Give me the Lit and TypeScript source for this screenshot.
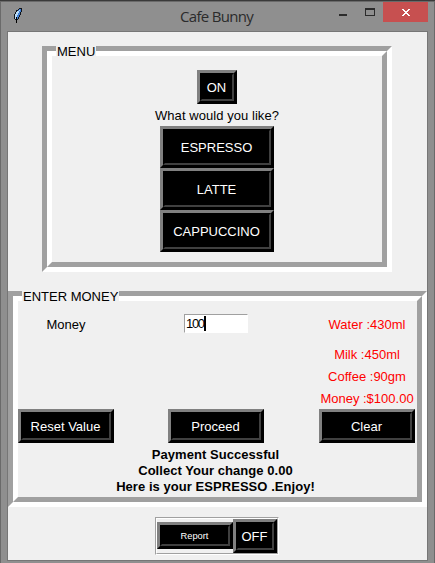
import { LitElement, html, css, svg } from "lit";
import { customElement, property } from "lit/decorators.js";

@customElement("tk-button")
class TkButton extends LitElement {
  @property() label = "";
  static styles = css`
    :host { display: block; box-sizing: border-box; background: #000; flex: none; }
    .outer { box-sizing: border-box; height: 100%; border: 3px solid; border-color: #808080 #000 #000 #808080; }
    .inner {
      box-sizing: border-box; height: 100%; border: 2px solid; border-color: #000 #404040 #404040 #000;
      display: flex; align-items: center; justify-content: center; color: #fff; white-space: nowrap; line-height: 16px;
      padding-top: var(--label-drop, 2px); padding-right: 1px;
    }
  `;
  render() {
    return html`<div class="outer"><div class="inner">${this.label}</div></div>`;
  }
}

@customElement("tk-labelframe")
class TkLabelFrame extends LitElement {
  @property() label = "";
  static styles = css`
    :host { display: block; box-sizing: border-box; position: relative; }
    .outer { box-sizing: border-box; height: 100%; border: 5px solid; border-color: #a0a0a0 #fff #fff #a0a0a0; }
    .inner { box-sizing: border-box; height: 100%; border: 5px solid; border-color: #fff #a0a0a0 #a0a0a0 #fff; }
    .caption {
      position: absolute; left: 14px; top: -2px; padding: 0 1px; height: 12px; line-height: 16px;
      background: #f0f0f0; white-space: nowrap;
    }
  `;
  render() {
    return html`<div class="outer"><div class="inner"><slot></slot></div></div>
      <div class="caption">${this.label}</div>`;
  }
}

@customElement("app-root")
class AppRoot extends LitElement {
  static styles = css`
    :host {
      display: block; box-sizing: border-box; width: 435px; height: 563px; overflow: hidden;
      background: #8f8f8f; color: #000; font: 13px/16px "Liberation Sans", Arial, sans-serif;
      border-top: 1px solid #3a3a3a; white-space: nowrap;
    }
    .window {
      box-sizing: border-box; height: 562px; padding: 0 6px 0 6px;
      border: 1px solid #6a6a6a; border-bottom: 0; display: flex; flex-direction: column;
    }
    .titlebar { height: 29px; display: flex; flex: none; }
    .feather { width: 8px; height: 15px; margin: 6px 0 0 7px; flex: none; }
    .title {
      flex: 1; margin: 4px 0 0 77px; text-align: center; color: #2b2b2b;
      font: 15px/20px "Open Sans", "Noto Sans", sans-serif; letter-spacing: -0.7px;
    }
    .controls { width: 94px; height: 20px; flex: none; }
    .client {
      box-sizing: border-box; width: 421px; height: 530px; border: 1px solid #767676; background: #f0f0f0;
      display: flex; flex-direction: column; align-items: center; flex: none;
    }
    .menu { width: 350px; height: 226px; margin: 14px 0 0 -1px; }
    .menu-items { display: flex; flex-direction: column; align-items: center; padding-top: 14px; }
    .on { width: 40px; height: 34px; }
    .ask { height: 18px; padding-top: 4px; letter-spacing: 0.06px; }
    .drink { width: 114px; height: 42px; }
    .money { width: 419px; height: 216px; margin-top: 19px; }
    .grid { display: grid; grid-template-columns: 96px 204px 98px; }
    .grid > * { justify-self: center; }
    .row1 { margin-top: 16px; }
    .entry {
      box-sizing: border-box; width: 64px; height: 19px; margin-top: 13px; background: #fff;
      border: 1px solid; border-color: #a0a0a0 #fff #fff #a0a0a0; display: flex; align-items: center; padding-left: 1px;
      letter-spacing: -1.3px;
    }
    .caret { width: 2px; height: 15px; background: #000; }
    .red { color: #f00; }
    .milk { padding-top: 14px; }
    .stock { padding-top: 6px; }
    .action { width: 96px; height: 34px; margin-top: 2px; }
    .result { font-weight: bold; text-align: center; letter-spacing: 0.05px; padding-top: 4px; margin-right: 4px; }
    .footer {
      display: flex; align-items: center; margin: 10px 0 0 -1px; box-sizing: border-box;
      width: 124px; height: 38px; border: 1px solid; border-color: #a0a0a0 #fff #fff #a0a0a0;
    }
    .footer-inner {
      display: flex; align-items: center; box-sizing: border-box; width: 122px; height: 36px;
      border: 1px solid; border-color: #fff #a0a0a0 #a0a0a0 #fff;
    }
    .report { width: 76px; height: 27px; margin-bottom: 1px; font-size: 9.3px; --label-drop: 0px; }
    .off { width: 44px; height: 34px; }
  `;

  private feather() {
    return svg`
      <path d="M5 0h3v4H7v3H6v2H5v2H4v1H3v3H2v-3H1v-1H0V6h1V4h1V2h2V1h1z" fill="#10151c"/>
      <path d="M5 1h2v3H6v3H5v2H4v2H1V6h1V4h1V3h1V2h1z" fill="#3f80d6"/>
      <path d="M5 2h1v1H5v2H4v2H3v2H2v2H1V6h1V4h1V3h2z" fill="#b9dcf7"/>
      <path d="M2 9h1v6H2z" fill="#000"/>`;
  }

  render() {
    return html`
      <div class="window">
        <div class="titlebar">
          <svg class="feather" viewBox="0 0 8 15" shape-rendering="crispEdges">${this.feather()}</svg>
          <div class="title">Cafe Bunny</div>
          <svg class="controls" viewBox="0 0 94 20" shape-rendering="crispEdges">
            <path d="M5 12h8v2H5z" fill="#2b2b2b"/>
            <path d="M31 6h10v8H31zM32 8v5h8V8z" fill="#2b2b2b" fill-rule="evenodd"/>
            <path d="M49 0h45v20H49z" fill="#c75050"/>
            <path d="M68 7h2v1h1v1h2V8h1V7h2v1h-1v1h-1v1h-1v1h1v1h1v1h1v1h-2v-1h-1v-1h-2v1h-1v1h-2v-1h1v-1h1v-1h1v-1h-1V9h-1V8h-1z" fill="#fff"/>
          </svg>
        </div>
        <div class="client">
          <tk-labelframe class="menu" label="MENU">
            <div class="menu-items">
              <tk-button class="on" label="ON"></tk-button>
              <div class="ask">What would you like?</div>
              ${["ESPRESSO", "LATTE", "CAPPUCCINO"].map((d) => html`<tk-button class="drink" label=${d}></tk-button>`)}
            </div>
          </tk-labelframe>
          <tk-labelframe class="money" label="ENTER MONEY">
            <div class="grid">
              <div class="row1">Money</div>
              <div class="entry">100<span class="caret"></span></div>
              <div class="row1 red">Water :430ml</div>
              <span></span><span></span><div class="red milk">Milk :450ml</div>
              <span></span><span></span><div class="red stock">Coffee :90gm</div>
              <span></span><span></span><div class="red stock">Money :$100.00</div>
              <tk-button class="action" label="Reset Value"></tk-button>
              <tk-button class="action" label="Proceed"></tk-button>
              <tk-button class="action" label="Clear"></tk-button>
            </div>
            <div class="result">
              <div>Payment Successful</div>
              <div>Collect Your change 0.00</div>
              <div>Here is your ESPRESSO .Enjoy!</div>
            </div>
          </tk-labelframe>
          <div class="footer">
            <div class="footer-inner">
              <tk-button class="report" label="Report"></tk-button>
              <tk-button class="off" label="OFF"></tk-button>
            </div>
          </div>
        </div>
      </div>`;
  }
}
